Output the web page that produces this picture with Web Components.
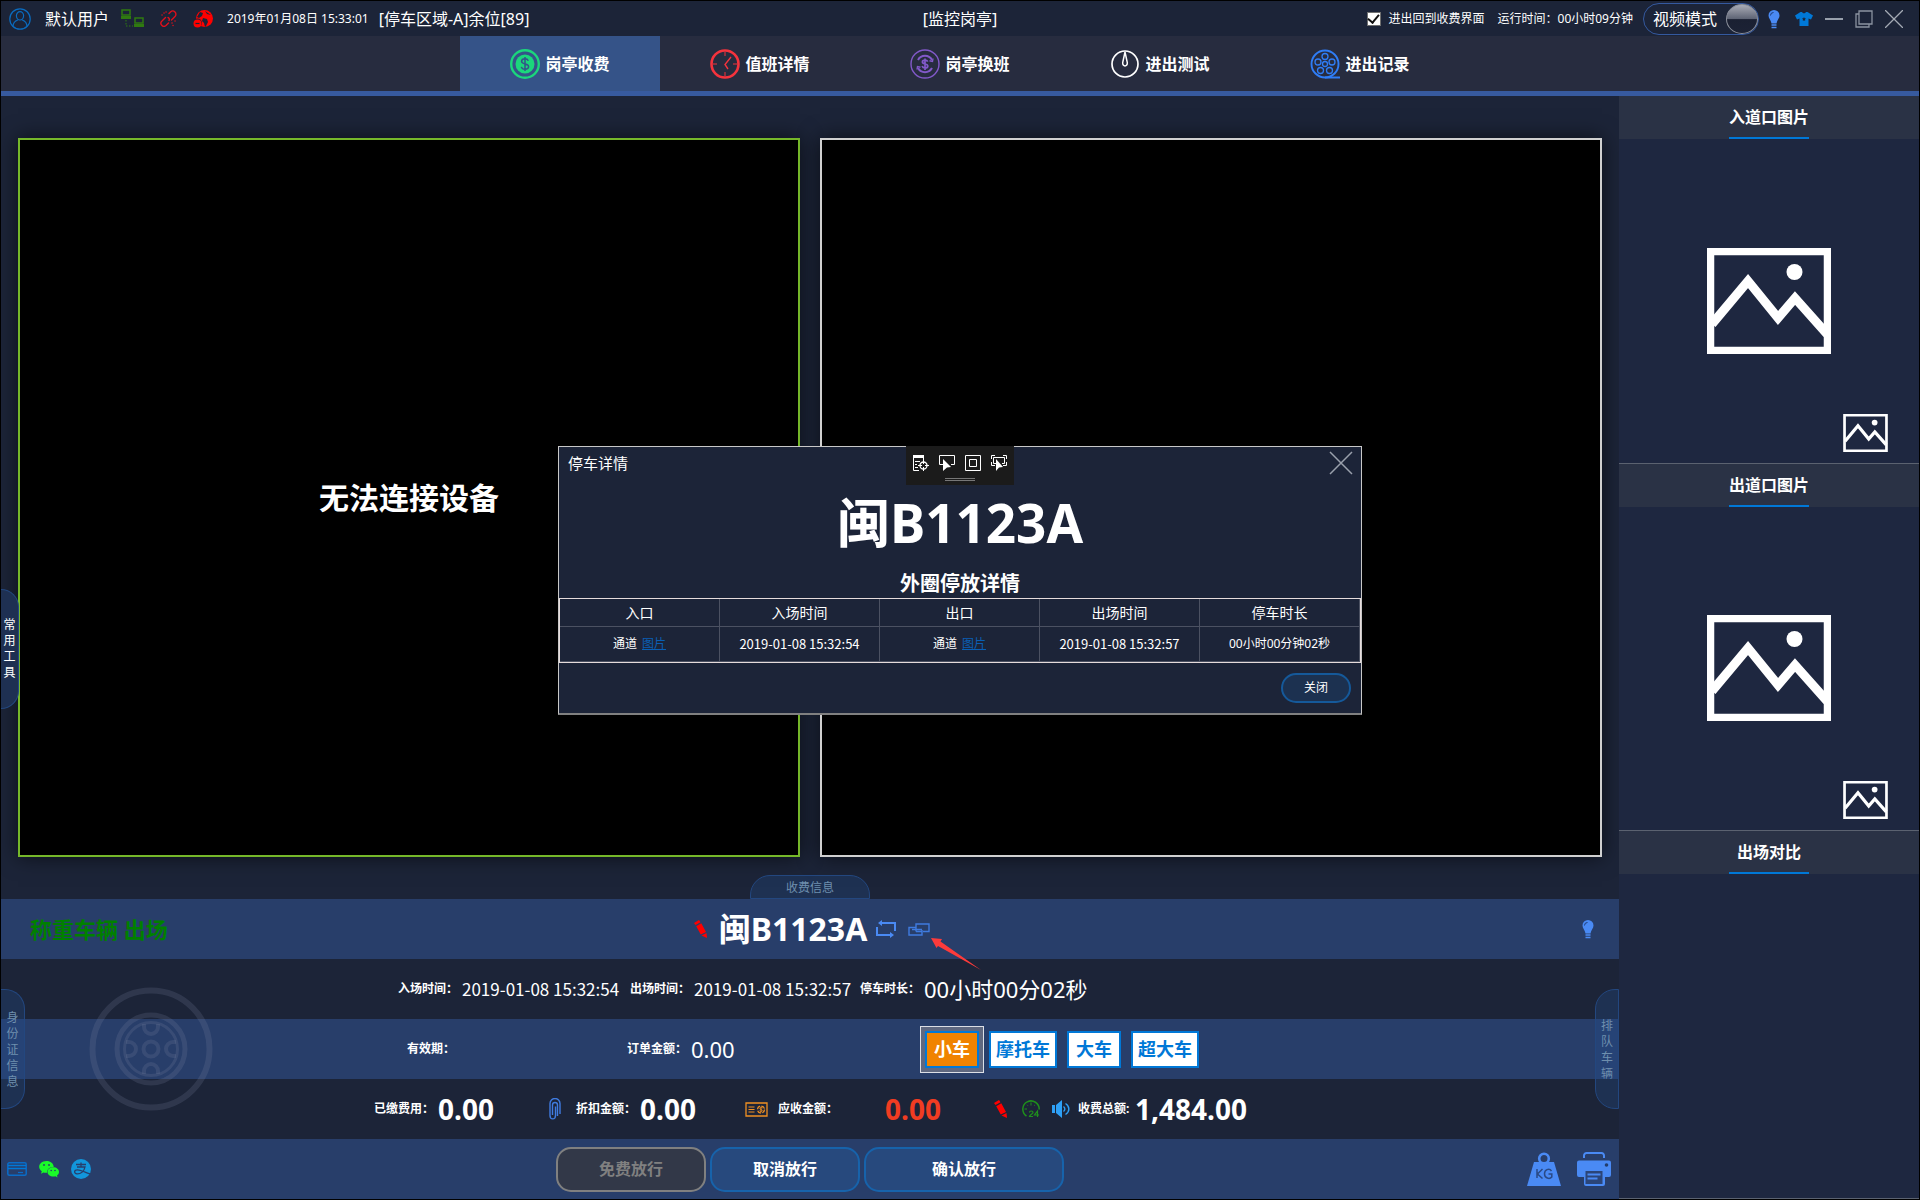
<!DOCTYPE html>
<html lang="zh-CN">
<head>
<meta charset="utf-8">
<title>监控岗亭</title>
<style>
  html, body { margin: 0; padding: 0; background: #000; }
  body { font-family: "Noto Sans", "Noto Sans CJK SC", sans-serif; font-size: 12px; color: #fff; }
</style>
</head>
<body>
<booth-app></booth-app>
<script>
const BASE = `*{box-sizing:border-box}
button{font-family:inherit;color:inherit;margin:0;padding:0;border:0;background:none;cursor:pointer}`;

function define(name, css, html) {
  const template = document.createElement('template');
  customElements.define(name, class extends HTMLElement {
    connectedCallback() {
      if (this.shadowRoot) return;
      template.innerHTML = `<style>${BASE}${css}</style>${typeof html === 'function' ? html(this) : html}`;
      this.attachShadow({ mode: 'open' }).append(template.content.cloneNode(true));
    }
  });
}

const PICTURE = `<path d="M3.500 3.500H120.500V102.500H3.500Z" fill="none" stroke="#fff" stroke-width="7.500"/><path d="M5 76 41 33 71 70 88 50 120 86" fill="none" stroke="#fff" stroke-width="9"/><circle cx="87.500" cy="24" r="8" fill="#fff"/>`;
const BULB = `<path d="M10 1a5.500 5.500 0 0 1 5.500 5.500c0 3-2.500 4.500-3 8h-5c-.5-3.500-3-5-3-8A5.500 5.500 0 0 1 10 1z" fill="#4a8af4"/><path d="M6.500 6.500a3 3 0 0 1 3-3" fill="none" stroke="#1e3c78"/><path d="M7.500 16h5M7.500 18.500h5" stroke="#4a8af4" stroke-width="1.500"/>`;
const PENCIL = `<path d="M0 3 5 0 6.500 2.200 1.500 5zM2.200 6.200 7.300 3.200 12 12 6.800 14.600zM7.500 15.600 12.500 13 13 18z" fill="#f00"/>`;

/* name: [width, height, viewBox, markup] */
const ICONS = {
  user: [22, 22, '0 0 22 22', `<g fill="none" stroke="#0a6cc0" stroke-width="1.200"><circle cx="11" cy="11" r="10.200"/><ellipse cx="11" cy="7.800" rx="3.600" ry="4.200"/><path d="M4 18.500c0-3.500 1.800-5.500 4.800-6.500M18 18.500c0-3.500-1.800-5.500-4.800-6.500"/></g>`],
  net: [23, 19, '0 0 23 19', `<g fill="none" stroke="#2f7a10" stroke-width="1.500"><path d="M1 1h8v5H1zM14 9h8v5h-8z"/></g><path d="M0 7h10v3H0zM13 15h10v3H13z" fill="#2f7a10"/><path d="M5 11v6h7" fill="none" stroke="#2f7a10" stroke-dasharray="1.500 1.500"/>`],
  broken: [17, 17, '0 0 17 17', `<g fill="none" stroke="#e0101c" stroke-width="1.400" stroke-linecap="round"><path d="m9 3.500 1.500-1.500a3 3 0 0 1 4.500 4.500L11.500 10M8.500 13l-2.500 2.500A3 3 0 0 1 2 11l3.500-3.500M8 7.500a2 2 0 0 1 1 3"/><path d="m4 3 .1.100M2 5h.1M12 13h.1M15 11h.1M13 15.500h.1M6 2h.1"/></g>`],
  globe: [20, 18, '0 0 20 18', `<circle cx="11.500" cy="8.500" r="8.500" fill="#f00"/><path d="m7 2 3 1-1 3-3 2-2-1M12 1l2 3 4 1M10 8l4 1 1 3-2 4-1 1-1-4-2-2z" fill="#1c2438"/><circle cx="4.500" cy="13" r="4.500" fill="#1c2438"/><circle cx="4.500" cy="13.500" r="4" fill="#f00"/><path d="M2.500 13.500h4" stroke="#1c2438" stroke-width="1.200"/>`],
  bulb: [18, 20, '1 0 18 20', BULB],
  shirt: [18, 14, '0 0 18 14', `<path d="M5.500 0h1.500c.8 1.800 3.200 1.800 4 0h1.500L18 3.500 16 7.500l-2.500-1V14h-9V6.500L2 7.500 0 3.500z" fill="#0078d7"/><path d="m9 5 .6 1.300 1.400.2-1 1 .2 1.400L9 8.200l-1.200.7.2-1.400-1-1 1.400-.2z" fill="#1c2438"/>`],
  min: [18, 18, '0 0 18 18', `<path d="M0 9h18" stroke="#98a0ac" stroke-width="2"/>`],
  restore: [18, 18, '0 0 18 18', `<path d="M4 1h13v13H4zM4 4H1v13h13v-3" fill="none" stroke="#8b93a0" stroke-width="1.300"/>`],
  close: [18, 18, '0 0 18 18', `<path d="m0 0 18 18M18 0 0 18" stroke="#a4aab4" stroke-width="1.300"/>`],
  closeBig: [24, 24, '0 0 24 24', `<path d="m1 1 22 22M23 1 1 23" stroke="#9aa0ac" stroke-width="1.500"/>`],
  dollar: [30, 30, '0 0 30 30', `<circle cx="15" cy="15" r="13.800" fill="none" stroke="#1bd67c" stroke-width="2.400"/><circle cx="15" cy="15" r="9.500" fill="#1bd67c"/><path d="M18.300 11.700c-.6-1.500-1.800-2-3.300-2-2 0-3.400 1-3.400 2.600 0 3.700 7 1.700 7 5.300 0 1.700-1.500 2.700-3.600 2.700-1.800 0-3.200-.8-3.700-2.400M15 8v14" fill="none" stroke="#355388" stroke-width="1.500"/>`],
  clock: [30, 30, '0 0 30 30', `<circle cx="15" cy="15" r="13.500" fill="none" stroke="#f5333d" stroke-width="2.600"/><path d="M15 3v4M15 23v4M3 15h4M23 15h4" stroke="#f5333d"/><path d="m21 8-6 7.500 3 4.500" fill="none" stroke="#f5333d" stroke-width="1.400"/>`],
  shift: [30, 30, '0 0 30 30', `<g fill="none" stroke="#8259c9" stroke-width="1.400"><circle cx="15" cy="15" r="14"/><path d="M8 11A8 8 0 0 1 22 11M22 19A8 8 0 0 1 8 19" stroke-width="2"/><path d="m23 9.500-.5 3-3-.8M7 20.500l.5-3 3 .8"/><path d="M17.700 12.700c-.5-1.200-1.400-1.600-2.700-1.600-1.600 0-2.600.7-2.600 1.900 0 2.700 5.400 1.200 5.400 4 0 1.300-1.100 2-2.800 2-1.400 0-2.500-.6-2.900-1.900M15 9.500v11.500" stroke-width="1.700"/></g>`],
  gauge: [30, 30, '0 0 30 30', `<g fill="none" stroke="#fff" stroke-width="1.700"><circle cx="15" cy="15" r="13"/><path d="m15 3-2.300 10.500c-.5 4.500 5.100 4.500 4.600 0z" stroke-width="1.500"/></g>`],
  reel: [30, 30, '0 0 30 30', `<g fill="none" stroke="#2f7df6" stroke-width="1.300"><circle cx="15" cy="15" r="13.500" stroke-width="1.900"/><path d="M15 28.500h15" stroke-width="2"/><circle cx="15" cy="15" r="2.500"/><circle cx="15" cy="7.500" r="3"/><circle cx="8" cy="13" r="3"/><circle cx="22" cy="13" r="3"/><circle cx="10.500" cy="21.500" r="3"/><circle cx="19.500" cy="21.500" r="3"/></g>`],
  picture: [124, 106, '0 0 124 106', PICTURE],
  pictureSmall: [45, 38, '0 0 124 106', PICTURE],
  pencil: [13, 18, '0 0 13 18', PENCIL],
  swap: [20, 18, '0 0 20 18', `<g fill="none" stroke="#4a8af4" stroke-width="2"><path d="M5 3h14v8M1 7v8h13"/></g><path d="M2 3 6 0v6zM18 15l-4-3v6z" fill="#4a8af4"/>`],
  chain: [22, 13, '0 0 22 13', `<g fill="none" stroke="#3f7be0" stroke-width="1.400"><path d="M14 7v5H1V4.500h7M8 6V1h13v7.500H15"/><path d="M4 6.500h10M8 8.500h6M8 6v2.500"/></g>`],
  clip: [12, 22, '0 0 12 22', `<path d="M8.500 18V7a2.500 2.500 0 0 0-5 0v10M11 16V5.500a5 5 0 0 0-10 0v12c0 4.500 5.500 4.500 5.500 0V8.500" fill="none" stroke="#3f7be0" stroke-width="1.400"/>`],
  bill: [23, 15, '0 0 23 15', `<g fill="none" stroke="#f09022" stroke-width="1.300"><path d="M1 1h21v13H1z"/><path d="M3.500 5h6M3.500 7.500h6M3.500 10h6" stroke-width="1"/><circle cx="16" cy="7.500" r="3.500" stroke-dasharray="4 1.500"/><path d="M17.500 6c-1.500-1-3 0-2.500 1 .5.700 2 .5 2.200 1.300.2 1-1.500 1.400-2.700.5M16 4.500v6" stroke-width=".9"/></g>`],
  day24: [18, 18, '0 0 18 18', `<path d="M4.500 16A8.200 8.200 0 1 1 17.200 9.500" fill="none" stroke="#1f8f1c" stroke-width="1.500"/><path d="M9 2.500v3M2.500 9h2.500M5 4.800l.8.800M13 4.800l-.8.800" stroke="#1f8f1c"/><path d="M7.500 12.500c0-2 3.500-2 3.500 0 0 1.200-3 2.300-3.500 4H11M15.500 17v-6L12.500 15h4.500" fill="none" stroke="#1f8f1c" stroke-width="1.200"/>`],
  speaker: [18, 18, '0 0 18 18', `<path d="M0 5h3v8H0zM4 5l6-5v18l-6-5z" fill="#2ea0f6"/><path d="M11.500 6.500c1.800 1.500 1.800 3.500 0 5M13.500 3.500c4.500 3 4.500 8 0 11" fill="none" stroke="#2ea0f6" stroke-width="1.400"/>`],
  card: [20, 20, '0 0 20 20', `<rect x=".8" y="3.800" width="18.400" height="12.500" rx="1.500" fill="none" stroke="#0a6cc8" stroke-width="1.500"/><path d="M1 6.500h18M1 9.500h18" stroke="#0078d7" stroke-width="1.300"/><path d="M11 13.500h5" stroke="#0a6cc8" stroke-width="1.200"/>`],
  wechat: [20, 20, '0 0 20 20', `<path d="M7.500 2C11.500 2 14.700 4.600 14.700 8 14 7.800 8 8 8 13.800 5.500 14 5 13.500 4.500 13.400L2 14.800l.8-2.500C-2.500 8.500.8 2 7.500 2z" fill="#1afa29"/><path d="M14.200 8.300c3.400 0 5.800 2.100 5.800 4.700 0 1.500-.8 2.700-2 3.500l.5 1.900-2-1.100c-4.500 1-8-1.300-8-4.300 0-2.600 2.500-4.700 5.700-4.700z" fill="#1afa29"/><g fill="#283e6a"><circle cx="5" cy="6" r=".9"/><circle cx="10" cy="6" r=".9"/><circle cx="12.200" cy="11.500" r=".8"/><circle cx="16" cy="11.500" r=".8"/></g>`],
  alipay: [20, 20, '0 0 20 20', `<circle cx="10" cy="10" r="10" fill="#1296db"/><path d="M5 5.500h10M10 3.500V8M6 8h8c-.8 4.500-4.500 7-8 6.800-3.500-.4-3-4 .5-4 3 0 6.500 2 12.500 4" fill="none" stroke="#283e6a" stroke-width="1.300"/>`],
  kg: [34, 34, '0 0 34 34', `<path d="M7 10h20l7 24H0z" fill="#4a8af4"/><circle cx="17" cy="6.500" r="4.800" fill="#283e6a" stroke="#4a8af4" stroke-width="2.600"/><path d="M10 17v9M15.500 17l-5 5 5 4.500M24.500 19c-2.500-3.500-7-1-7 2.700 0 4.500 5 6 7.300 3.300V22H21.500" fill="none" stroke="#2a4a86" stroke-width="1.500"/>`],
  printer: [34, 34, '0 0 34 34', `<path d="M7 6V3.500A2.500 2.500 0 0 1 9.500 1h15A2.500 2.500 0 0 1 27 3.500V6" fill="none" stroke="#4a8af4" stroke-width="2"/><path d="M2 8.500h30a2 2 0 0 1 2 2V23a2 2 0 0 1-2 2h-4v7a2 2 0 0 1-2 2H9a2 2 0 0 1-2-2v-7H2a2 2 0 0 1-2-2V10.500a2 2 0 0 1 2-2z" fill="#4a8af4"/><path d="M8.500 19h17v13h-17z" fill="#2b4578"/><path d="M10.500 22.500h13M10.500 26.500h10" stroke="#4a8af4" stroke-width="2"/><circle cx="29.500" cy="13" r="1.800" fill="#233d6b"/>`],
  tire: [124, 124, '-62 -62 124 124', `<g fill="none" stroke="#7f87a4" stroke-opacity=".2" stroke-width="6"><circle r="58.500"/><circle r="34" stroke-width="5"/><circle r="26.500" stroke-width="3"/><circle r="7.500" stroke-width="4"/><path d="M-7-25v3a7 7 0 0 0 14 0v-3M-7 25v-3a7 7 0 0 1 14 0v3M-25-7h3a7 7 0 0 1 0 14h-3M25-7h-3a7 7 0 0 0 0 14h3" stroke-width="4"/></g>`],
  arrow: [50, 32, '0 0 50 32', `<path d="M0 0 11 1 9.500 3.500 50 32 7 8 5.500 10z" fill="#fc3b3b"/>`],
  toolTree: [16, 16, '0 0 16 16', `<path d="M.5 15.500V2h10v3M.5 15.500H6M2 6.500h5M2 9.500h2M2 12.500h3" fill="none" stroke="#fff"/><path d="M0 0h11v3H0z" fill="#fff"/><circle cx="10.500" cy="10.500" r="3.500" fill="none" stroke="#fff" stroke-width="1.300"/><path d="M10.500 5v4M10.500 12v4M5 10.500h4M12 10.500h4" stroke="#fff"/>`],
  toolSelect: [16, 16, '0 0 16 16', `<path d="M4 9.500H.5V.5h15v9H12" fill="none" stroke="#fff"/><path d="m4 4 8 8-4 .5L4 16z" fill="#fff"/>`],
  toolBox: [16, 16, '0 0 16 16', `<path d="M.5.5h15v15H.5zM4.500 4.500h7v7h-7z" fill="none" stroke="#fff"/>`],
  toolTrack: [16, 16, '0 0 16 16', `<path d="M.5 4V.5H4M12 .5h3.500V4M.5 7v3.500H4M15.500 7v3.500H12M5 8.500H2.500v-6h11v6H11" fill="none" stroke="#fff"/><path d="m5 4 7 8-4 .5L5 16z" fill="#fff"/>`]
};

define('ui-icon', `:host{display:block;flex:none}svg{display:block}`, el => {
  const [w, h, box, art] = ICONS[el.getAttribute('name')];
  return `<svg width="${w}" height="${h}" viewBox="${box}" aria-hidden="true">${art}</svg>`;
});

define('title-bar', `
  :host{display:grid;grid-template-columns:1fr auto 1fr;align-items:center;background:#1c2438;font-size:16px;line-height:24px;white-space:nowrap}
  .side{display:flex;align-items:center}
  .left{padding-left:8px}
  .right{justify-content:flex-end;padding-right:16px}
  .name{margin:0 12px 0 14px}
  .left ui-icon{margin-right:16px}
  .left ui-icon[name=user]{margin-right:0}
  .left ui-icon[name=globe]{margin-right:14px}
  .time{font-size:12px;margin-right:10px}
  label{display:flex;align-items:center;gap:8px;font-size:12px;margin-right:13px}
  input{appearance:none;width:14px;height:14px;margin:0;background:#fff;border:1px solid #707070;display:grid;place-items:center}
  input:checked::after{content:"";width:5px;height:9px;border:solid #111;border-width:0 2px 2px 0;transform:translateY(-1px) rotate(40deg)}
  .run{font-size:12px;margin-right:10px}
  .mode{display:flex;align-items:center;justify-content:space-between;width:116px;height:32px;padding:0 0 0 9px;border:1px solid #34599f;border-radius:16px;font-size:16px;line-height:24px;margin-right:6px}
  .knob{width:32px;height:30px;border-radius:50%;border:1px solid #8b909c;background:linear-gradient(#a9acb6 0,#5d6374 50%,#1a2032 52%,#1c2235 100%)}
  .win{display:flex;align-items:center;gap:12px}
  .win button{display:block}`, `
  <div class="side left">
    <ui-icon name="user"></ui-icon><span class="name">默认用户</span>
    <ui-icon name="net"></ui-icon><ui-icon name="broken"></ui-icon><ui-icon name="globe"></ui-icon>
    <span class="time">2019年01月08日 15:33:01</span><span>[停车区域-A]余位[89]</span>
  </div>
  <div>[监控岗亭]</div>
  <div class="side right">
    <label><input type="checkbox" checked>进出回到收费界面</label>
    <span class="run">运行时间：00小时09分钟</span>
    <button class="mode" role="switch" aria-checked="true">视频模式<span class="knob"></span></button>
    <div class="win">
      <button aria-label="提示"><ui-icon name="bulb"></ui-icon></button>
      <button aria-label="皮肤"><ui-icon name="shirt"></ui-icon></button>
      <button aria-label="最小化"><ui-icon name="min"></ui-icon></button>
      <button aria-label="还原"><ui-icon name="restore"></ui-icon></button>
      <button aria-label="关闭"><ui-icon name="close"></ui-icon></button>
    </div>
  </div>`);

define('nav-tab', `
  :host{display:block;width:200px}
  button{display:flex;align-items:center;justify-content:center;gap:5px;width:100%;height:100%;font-size:16px;line-height:24px;font-weight:700}
  :host([active]) button{background:#355388}`,
  el => `<button><ui-icon name="${el.getAttribute('icon')}"></ui-icon><slot></slot></button>`);

define('nav-bar', `
  :host{display:block}
  nav{display:flex;justify-content:center;height:60px;background:#272c3f;border-bottom:5px solid #375a9f}`, `
  <nav>
    <nav-tab icon="dollar" active>岗亭收费</nav-tab>
    <nav-tab icon="clock">值班详情</nav-tab>
    <nav-tab icon="shift">岗亭换班</nav-tab>
    <nav-tab icon="gauge">进出测试</nav-tab>
    <nav-tab icon="reel">进出记录</nav-tab>
  </nav>`);

define('video-pane', `
  :host{display:flex;align-items:center;justify-content:center;flex:1;background:#000;border:2px solid #d0d0d0;box-shadow:0 0 20px rgba(0,0,0,.6);font-size:30px;line-height:40px;font-weight:700}
  :host([selected]){border-color:#76b82a}`, `<slot></slot>`);

define('drawer-tab', `
  :host{display:block;position:absolute}
  button{display:flex;align-items:center;justify-content:center;width:100%;height:100%;padding-top:2px;border:1px solid #23477f;background:rgba(36,84,150,.28);color:#6f8fae;font-size:12px;line-height:16px}
  :host([side]) span{width:12px;word-break:break-all}
  :host([side=left]) button{border-left:0;border-radius:0 20px 20px 0}
  :host([side=right]) button{border-radius:20px 0 0 20px}
  :host(:not([side])) button{border-radius:20px 20px 0 0}
  :host([lit]) button{padding-top:0;color:#fff;background:#1e3052}`, `<button><span><slot></slot></span></button>`);

define('image-card', `
  :host{display:flex;flex-direction:column;background:#1e2740;border-bottom:1px solid #5b6270}
  h2{margin:0;display:flex;justify-content:center;height:43px;background:#2a3245;font-size:16px;line-height:42px;font-weight:700}
  h2 span{width:80px;text-align:center;border-bottom:2px solid #0078d7}
  .view{flex:1;display:grid;place-items:center}
  .view>*{grid-area:1/1}
  .thumb{place-self:end;margin:0 31px 11px 0}
  :host([empty]) .view{display:none}`, `
  <h2><span><slot></slot></span></h2>
  <div class="view"><ui-icon name="picture"></ui-icon><ui-icon class="thumb" name="pictureSmall"></ui-icon></div>`);

define('car-types', `
  :host{display:flex;gap:10px}
  button{height:37px;padding:0 7px;border:2px solid #0078d7;background:#fff;color:#0078d7;font-size:18px;line-height:33px;font-weight:700}
  .wide{padding:0 5px}
  .on{background:#f08300;color:#fff;box-shadow:0 0 0 4px #5f6880,0 0 0 5px #dcdfe6}`, `
  <button class="on">小车</button><button class="wide">摩托车</button><button>大车</button><button class="wide">超大车</button>`);

define('charge-panel', `
  :host{display:block;position:relative;background:#1c2438}
  .band{height:60px;display:grid;align-items:center}
  .lit{background:#283e6a}
  .line{width:900px;margin:0 auto;display:grid;align-items:center;white-space:nowrap}
  .times{padding-left:38px;grid-template-columns:64px 168px 64px 166px 64px auto}
  .order{padding-left:47px;grid-template-columns:220px 64px 234px auto}
  .money{padding-left:14px;grid-template-columns:64px 111px 27px 64px 105px 33px 107px 109px 28px 30px 26px 57px auto}
  label{font-size:12px;line-height:18px;font-weight:700}
  output{line-height:40px}
  .date{font-family:"Noto Sans CJK SC",sans-serif;font-size:17px}
  .mid{font-size:22px}
  .big{font-size:28px;font-weight:700}
  .due{color:#f03c22}
  .head{grid-template-columns:1fr auto 1fr}
  .state{padding-left:29px;color:#008000;font-size:22px;line-height:32px;font-weight:700}
  .plate{display:flex;align-items:center;gap:12px;padding-left:4px;font-size:32px;line-height:44px;font-weight:700}
  .plate .links{display:flex;align-items:center;gap:12px;margin-left:-3px}
  .head .tip{justify-self:end;margin-right:22px}
  .foot{grid-template-columns:1fr auto 1fr}
  .icons{display:flex;gap:12px;padding-left:6px}
  .tools{display:flex;gap:16px;justify-content:flex-end;padding-right:8px}
  .acts{display:flex;gap:4px}
  .acts button{width:150px;height:45px;border:2px solid #1763ab;border-radius:15px;background:#27497d;font-size:16px;line-height:24px;font-weight:700}
  .acts .ok{width:200px}
  .acts button:disabled{border-color:#808080;background:#323848;color:#808080}
  .tire{position:absolute;left:88px;top:88px}
  .pointer{position:absolute;left:50%;top:39px;margin-left:121px}
  .info{left:50%;margin-left:-60px;top:-24px;width:120px;height:24px}
  .ident{left:0;top:90px;width:24px;height:120px}
  .queue{right:0;top:90px;width:24px;height:120px}`, `
  <div class="band lit head">
    <div class="state">称重车辆 出场</div>
    <div class="plate"><ui-icon name="pencil"></ui-icon>闽B1123A<span class="links"><ui-icon name="swap"></ui-icon><ui-icon name="chain"></ui-icon></span></div>
    <ui-icon class="tip" name="bulb"></ui-icon>
  </div>
  <div class="band"><div class="line times">
    <label for="in">入场时间：</label><output id="in" class="date">2019-01-08 15:32:54</output>
    <label for="out">出场时间：</label><output id="out" class="date">2019-01-08 15:32:57</output>
    <label for="stay">停车时长：</label><output id="stay" class="mid">00小时00分02秒</output>
  </div></div>
  <div class="band lit"><div class="line order">
    <label>有效期：</label><label for="order">订单金额：</label><output id="order" class="mid">0.00</output><car-types></car-types>
  </div></div>
  <div class="band"><div class="line money">
    <label for="paid">已缴费用：</label><output id="paid" class="big">0.00</output>
    <ui-icon name="clip"></ui-icon><label for="off">折扣金额：</label><output id="off" class="big">0.00</output>
    <ui-icon name="bill"></ui-icon><label for="due">应收金额：</label><output id="due" class="big due">0.00</output>
    <ui-icon name="pencil"></ui-icon><ui-icon name="day24"></ui-icon><ui-icon name="speaker"></ui-icon>
    <label for="sum">收费总额:</label><output id="sum" class="big">1,484.00</output>
  </div></div>
  <div class="band lit foot">
    <div class="icons"><ui-icon name="card"></ui-icon><ui-icon name="wechat"></ui-icon><ui-icon name="alipay"></ui-icon></div>
    <div class="acts"><button disabled>免费放行</button><button>取消放行</button><button class="ok">确认放行</button></div>
    <div class="tools"><ui-icon name="kg"></ui-icon><ui-icon name="printer"></ui-icon></div>
  </div>
  <ui-icon class="tire" name="tire"></ui-icon>
  <ui-icon class="pointer" name="arrow"></ui-icon>
  <drawer-tab class="info">收费信息</drawer-tab>
  <drawer-tab class="ident" side="left">身份证信息</drawer-tab>
  <drawer-tab class="queue" side="right">排队车辆</drawer-tab>`);

define('parking-dialog', `
  :host{display:block;position:absolute;top:445px;left:50%;margin-left:-402px;width:804px;background:#1c2438;border:1px solid #c8c8c8;border-bottom:2px solid #808080;box-sizing:border-box}
  header{display:flex;justify-content:space-between;align-items:center;height:32px;padding:0 8px 0 9px;font-size:15px;line-height:22px}
  .debug{position:absolute;top:-1px;left:50%;margin-left:-54px;width:108px;height:39px;background:#1b1b1b;padding-top:9px;display:flex;flex-direction:column;align-items:center;gap:7px}
  .debug div{display:flex;gap:10px}
  .debug i{width:30px;height:3px;border:solid #777;border-width:1px 0}
  h1{margin:8px 0 0;text-align:center;font-size:53px;line-height:72px;font-weight:700}
  h2{margin:11px 0 0;text-align:center;font-size:20px;line-height:28px;font-weight:700}
  .grid{border:1px solid #e6dcdc}
  table{width:100%;table-layout:fixed;border-collapse:separate;border-spacing:0;line-height:20px}
  th,td{padding:0;text-align:center;border:solid #4b5162;border-width:0 1px 1px 0}
  th{height:28px;font-size:14px;font-weight:400}
  td{height:35px;font-size:12px}
  .date{font-family:"Noto Sans CJK SC",sans-serif;font-size:13px}
  a{color:#0a5fb4;margin-left:5px}
  footer{display:flex;justify-content:flex-end;padding:10px 10px}
  footer button{width:70px;height:30px;border:2px solid #15599a;border-radius:15px;background:#1c3150;font-size:12px;line-height:18px}`, `
  <header><span>停车详情</span><button aria-label="关闭窗口"><ui-icon name="closeBig"></ui-icon></button></header>
  <div class="debug"><div><ui-icon name="toolTree"></ui-icon><ui-icon name="toolSelect"></ui-icon><ui-icon name="toolBox"></ui-icon><ui-icon name="toolTrack"></ui-icon></div><i></i></div>
  <h1>闽B1123A</h1>
  <h2>外圈停放详情</h2>
  <div class="grid"><table>
    <thead><tr><th>入口</th><th>入场时间</th><th>出口</th><th>出场时间</th><th>停车时长</th></tr></thead>
    <tbody><tr>
      <td>通道<a href="#in">图片</a></td><td class="date">2019-01-08 15:32:54</td>
      <td>通道<a href="#out">图片</a></td><td class="date">2019-01-08 15:32:57</td><td>00小时00分钟02秒</td>
    </tr></tbody>
  </table></div>
  <footer><button>关闭</button></footer>`);

define('booth-app', `
  :host{display:grid;grid-template-rows:35px auto 1fr;min-height:100vh;position:relative;border:1px solid #000;background:#1c2438;box-sizing:border-box}
  main{display:grid;grid-template-columns:1fr 300px}
  .work{display:flex;flex-direction:column}
  .videos{flex:1;display:flex;gap:20px;padding:42px 17px;position:relative;overflow:hidden}
  aside{display:grid;grid-template-rows:repeat(3,1fr)}
  .common{left:0;top:50%;margin-top:91px;width:18px;height:120px}`, `
  <title-bar></title-bar>
  <nav-bar></nav-bar>
  <main>
    <section class="work">
      <div class="videos">
        <video-pane selected>无法连接设备</video-pane>
        <video-pane></video-pane>
        <drawer-tab class="common" side="left" lit>常用工具</drawer-tab>
      </div>
      <charge-panel></charge-panel>
    </section>
    <aside>
      <image-card>入道口图片</image-card>
      <image-card>出道口图片</image-card>
      <image-card empty>出场对比</image-card>
    </aside>
  </main>
  <parking-dialog></parking-dialog>`);
</script>
</body>
</html>
